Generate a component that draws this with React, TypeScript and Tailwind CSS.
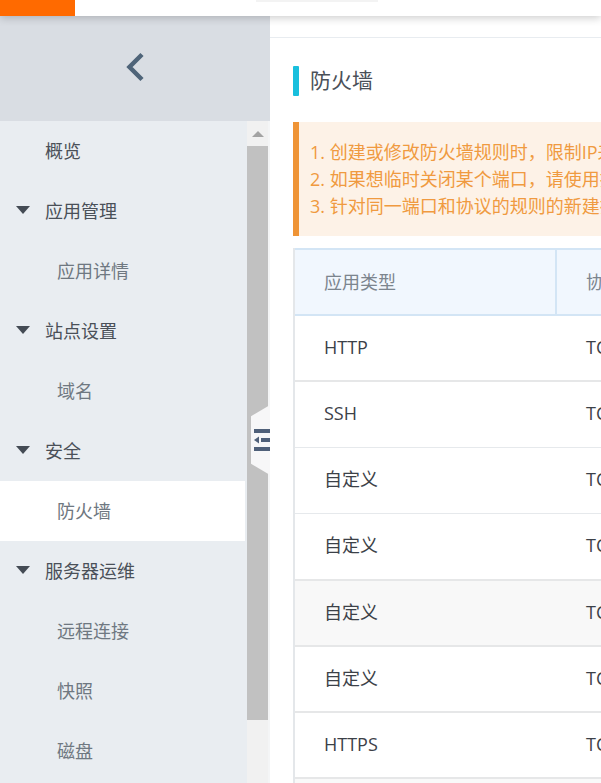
const menu = [
  { label: "概览", level: 0 },
  { label: "应用管理", level: 1 },
  { label: "应用详情", level: 2 },
  { label: "站点设置", level: 1 },
  { label: "域名", level: 2 },
  { label: "安全", level: 1 },
  { label: "防火墙", level: 2, active: true },
  { label: "服务器运维", level: 1 },
  { label: "远程连接", level: 2 },
  { label: "快照", level: 2 },
  { label: "磁盘", level: 2 },
];

const rows = [
  { type: "HTTP", thick: true },
  { type: "SSH" },
  { type: "自定义" },
  { type: "自定义", thick: true, tall: true },
  { type: "自定义", hover: true, thick: true },
  { type: "自定义", thick: true },
  { type: "HTTPS", thick: true },
];

function MenuItem({ item }: { item: (typeof menu)[number] }) {
  return (
    <div
      className={
        "relative flex h-[60px] w-[245px] shrink-0 items-center text-[18px] " +
        (item.active ? "bg-white " : "") +
        (item.level === 2 ? "pl-[57px] text-[#6f7881]" : "pl-[45px] text-[#4a5058]")
      }
    >
      {item.level === 1 && (
        <span className="absolute left-[16px] top-[25px] h-0 w-0 border-x-[7px] border-t-[8px] border-x-transparent border-t-[#444b54]" />
      )}
      {item.label}
    </div>
  );
}

export default function App() {
  return (
    <div className="flex h-[783px] w-[601px] flex-col overflow-hidden bg-white font-['Open_Sans','Noto_Sans_CJK_SC',sans-serif]">
      <header className="relative z-10 flex h-4 shrink-0 bg-white shadow-[0_2px_8px_rgba(0,0,0,0.2)]">
        <div className="h-full w-[75px] bg-[#ff6a00]" />
        <div className="ml-[181px] h-[2px] w-[122px] bg-[#f3f3f3]" />
      </header>

      <div className="relative flex min-h-0 flex-1">
        <aside className="flex w-[270px] shrink-0 flex-col bg-[#e9edf1]">
          <div className="flex h-[105px] shrink-0 items-center justify-center bg-[#d9dde3] pb-[3px]">
            <svg width="24" height="34" viewBox="0 0 24 34" fill="none">
              <path d="M19 4.5 L6.5 17 L19 29.5" stroke="#4f6479" strokeWidth="4.5" />
            </svg>
          </div>
          <div className="flex min-h-0 flex-1">
            <nav className="flex w-[247px] shrink-0 flex-col overflow-hidden">
              {menu.map((item) => (
                <MenuItem key={item.label} item={item} />
              ))}
            </nav>
            <div className="flex w-[21px] shrink-0 flex-col bg-[#f1f1f1]">
              <div className="flex h-[25px] shrink-0 items-start justify-center pt-[10px]">
                <span className="h-0 w-0 border-x-[6px] border-b-[6px] border-x-transparent border-b-[#a3a3a3]" />
              </div>
              <div className="h-[574px] bg-[#c1c1c1]" />
            </div>
            <div className="w-[2px] shrink-0 bg-[#f4f5f6]" />
          </div>
        </aside>

        <button className="absolute left-[251px] top-[389px] flex h-[70px] w-[19px] items-center justify-end bg-[#f7f7f8] [clip-path:polygon(0_16%,100%_0,100%_100%,0_84%)]">
          <svg width="16" height="22" viewBox="0 0 16 22" fill="#4f6079">
            <rect x="0" y="0" width="16" height="4" />
            <rect x="7" y="9" width="9" height="4" />
            <path d="M0 11 L5 7.5 V14.5 Z" />
            <rect x="0" y="18" width="16" height="4" />
          </svg>
        </button>

        <main className="min-w-0 flex-1 overflow-hidden">
          <div className="h-[22px] border-b border-[#e8ecf0]" />
          <div className="w-[340px] pl-[23px]">
            <div className="mt-[27px] flex h-[32px] items-center">
              <span className="h-[30px] w-[6px] rounded-[1px] bg-[#19bfdd]" />
              <h1 className="ml-[11px] text-[21px] font-normal whitespace-nowrap text-[#4a5058]">防火墙</h1>
            </div>
            <div className="mt-[25px] h-[114px] w-[400px] border-l-[6px] border-[#ef9436] bg-[#fdf2e7] pt-[17px] pl-[11px] text-[18px] leading-[27px] whitespace-nowrap text-[#f09a40]">
              <p>1. 创建或修改防火墙规则时，限制IP来源</p>
              <p>2. 如果想临时关闭某个端口，请使用拒绝策略</p>
              <p>3. 针对同一端口和协议的规则的新建操作</p>
            </div>

            <div className="mt-[12px] w-[400px] border-l-2 border-[#e4e7ea] text-[18px]">
              <div className="flex h-[68px] border-y-2 border-[#d3e5f5] bg-[#f1f7fe] text-[#7c858e]">
                <div className="flex w-[262px] items-center border-r-2 border-[#d3e5f5] pl-[29px]">应用类型</div>
                <div className="flex items-center pl-[29px]">协议</div>
              </div>
              {rows.map((row, i) => (
                <div
                  key={i}
                  className={
                    "flex items-center pb-[2px] text-[#3c4148] " +
                    (row.tall ? "h-[67px] " : "h-[66px] ") +
                    (row.thick ? "border-b-2 border-[#e6e7e8] " : "border-b border-[#e6e9ec] ") +
                    (row.hover ? "bg-[#f8f8f8]" : "bg-white")
                  }
                >
                  <div className="w-[262px] pl-[29px]">{row.type}</div>
                  <div className="pl-[29px]">TCP</div>
                </div>
              ))}
              <div className="h-[10px] bg-[#f9f9f9]" />
            </div>
          </div>
        </main>
      </div>
    </div>
  );
}
